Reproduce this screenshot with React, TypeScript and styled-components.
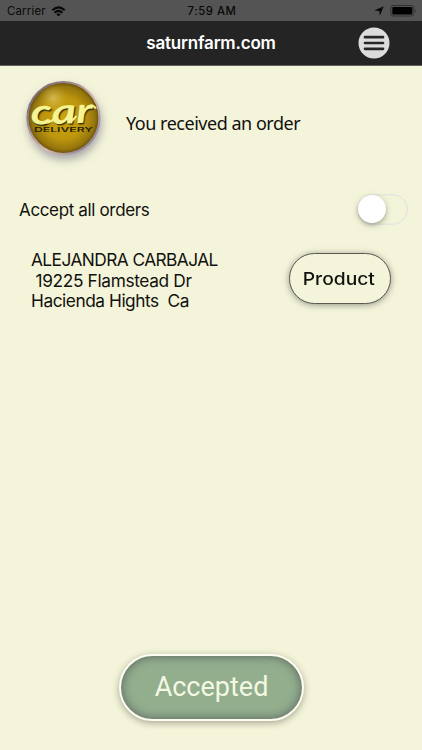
import React, { useState } from 'react';
import styled, { createGlobalStyle } from 'styled-components';

const GlobalStyle = createGlobalStyle`
  * { box-sizing: border-box; }
  body { margin: 0; background: #f4f4da; }
  button { font: inherit; padding: 0; cursor: pointer; }
`;

const Screen = styled.main`
  width: 422px;
  height: 750px;
  overflow: hidden;
  display: flex;
  flex-direction: column;
  background: #f4f4da;
  color: #11110e;
  font-family: Inter, "Liberation Sans", sans-serif;
`;

const StatusBar = styled.div`
  height: 21px;
  flex: none;
  display: grid;
  grid-template-columns: 1fr auto 1fr;
  align-items: center;
  padding: 1px 5px 0 7px;
  background: #545454;
  color: #080808;
  font-size: 11.3px;
  line-height: 20px;
`;

const StatusGroup = styled.div<{ $end?: boolean }>`
  display: flex;
  align-items: center;
  gap: ${({ $end }) => ($end ? 6 : 5)}px;
  justify-content: ${({ $end }) => ($end ? 'flex-end' : 'flex-start')};
  svg { display: block; }
`;

const Carrier = styled.span`
  letter-spacing: 0.25px;
`;

const Clock = styled.span`
  font-weight: 500;
  letter-spacing: 0.55px;
`;

const NavBar = styled.header`
  height: 45px;
  flex: none;
  display: grid;
  grid-template-columns: 1fr auto 1fr;
  align-items: center;
  padding: 0 32px;
  background: #242424;
  border-bottom: 1px solid #62625a;
`;

const SiteTitle = styled.h1`
  grid-column: 2;
  margin: 0;
  color: #fff;
  font-size: 17px;
  font-weight: 600;
  line-height: 20px;
  letter-spacing: -0.2px;
`;

const MenuButton = styled.button`
  justify-self: end;
  width: 32px;
  height: 32px;
  margin-top: -1px;
  border: 0;
  background: none;
  svg { display: block; }
`;

const Notice = styled.section`
  height: 114px;
  flex: none;
  display: flex;
  align-items: flex-start;
  padding: 15px 0 0 25px;
`;

const LogoSlot = styled.div`
  width: 101px;
  height: 86px;
  flex: none;
  svg { display: block; overflow: visible; }
`;

const NoticeText = styled.p`
  margin: 30px 0 0;
  font-family: "Noto Sans", "Open Sans", sans-serif;
  font-size: 18px;
  line-height: 24px;
  letter-spacing: -0.48px;
  white-space: nowrap;
`;

const SettingRow = styled.label`
  height: 60px;
  flex: none;
  display: flex;
  align-items: center;
  justify-content: space-between;
  padding: 0 14px 2px 19px;
  font-size: 17px;
  line-height: 20px;
`;

const SettingName = styled.span`
  padding-top: 2px;
  letter-spacing: -0.35px;
`;

const Toggle = styled.button<{ $on: boolean }>`
  width: 51px;
  height: 31px;
  display: flex;
  align-items: center;
  justify-content: ${({ $on }) => ($on ? 'flex-end' : 'flex-start')};
  border: 1.5px solid #e5e5e1;
  border-radius: 16px;
  background: ${({ $on }) => ($on ? '#92ae8d' : 'transparent')};
  box-shadow: inset 0 0 0 0.5px #e5e5e1;
`;

const Knob = styled.span`
  width: 28px;
  height: 28px;
  border-radius: 50%;
  background: #fff;
  box-shadow: 0 2px 4px rgba(50, 50, 40, 0.32), 0 2px 9px rgba(50, 50, 40, 0.12);
`;

const OrderRow = styled.section`
  flex: none;
  display: flex;
  justify-content: space-between;
  align-items: flex-start;
  padding: 8px 31px 0;
`;

const Address = styled.div`
  margin-top: 2px;
  font-size: 17.3px;
  line-height: 20.5px;
  white-space: pre;
`;

const AddressLine = styled.div<{ $spacing: number }>`
  letter-spacing: ${({ $spacing }) => $spacing}px;
`;

const ProductButton = styled.button`
  width: 102px;
  height: 51px;
  margin-top: 5px;
  border: 1px solid #5a5a50;
  border-radius: 26px;
  background: #f4f4da;
  color: #11110e;
  box-shadow: 0 1px 6px rgba(50, 50, 60, 0.5);
  font-size: 17.5px;
  font-weight: 500;
  line-height: 24px;
`;

const WideLabel = styled.span`
  display: inline-block;
  margin-left: -2px;
  transform: scaleX(1.1);
`;

const Footer = styled.footer`
  margin-top: auto;
  display: flex;
  justify-content: center;
  padding-bottom: 29px;
`;

const AcceptedButton = styled.button`
  width: 185px;
  height: 67px;
  padding: 0 0 2px 1px;
  border: 2px solid #fdfdf2;
  border-radius: 34px;
  background: #92ae8d;
  color: #f4f8e2;
  box-shadow: 0 2px 7px rgba(70, 70, 55, 0.45), inset 0 0 10px 1px #606b64;
  font-family: Roboto, sans-serif;
  font-size: 27px;
  line-height: 36px;
`;

const WifiIcon = () => (
  <svg width="15" height="11" viewBox="0 0 14 11" fill="none" stroke="#080808" strokeWidth="2">
    <path d="M.8 4.2Q7-1.4 13.2 4.2M3 6.7Q7 3.1 11 6.7" />
    <path d="M7 10.5 4.8 8.2Q7 6.5 9.2 8.2Z" fill="#080808" stroke="none" />
  </svg>
);

const LocationIcon = () => (
  <svg width="10" height="10" viewBox="0 0 10 10">
    <path d="M9.7.3 5.8 9.7 5.3 4.9.3 4.4Z" fill="#080808" />
  </svg>
);

const BatteryIcon = () => (
  <svg width="27" height="12" viewBox="0 0 27 12">
    <rect x=".8" y=".5" width="23" height="10.5" rx="2.4" fill="none" stroke="#303030" />
    <rect x="2.3" y="2" width="20" height="7.5" rx="1" fill="#000" />
    <path d="M25.2 4.1Q27 5.8 25.2 7.5Z" fill="#303030" />
  </svg>
);

const MenuIcon = () => (
  <svg width="32" height="32" viewBox="0 0 32 32">
    <circle cx="16" cy="16" r="15.5" fill="#dcdcdc" />
    <path d="M7 10.2H25M7 16H25M7 21.8H25" stroke="#262626" strokeWidth="2.7" strokeLinecap="round" />
  </svg>
);

const LogoWord = styled.text`
  font-family: Lato, sans-serif;
  font-size: 35px;
  font-style: italic;
  font-weight: 700;
  fill: #f5f490;
  text-shadow: 0.8px 1.5px 1px #353009;
`;

const LogoCaption = styled.text`
  font-family: Inter, sans-serif;
  font-size: 5.8px;
  font-weight: 600;
  fill: #292405;
`;

const CarLogo = () => (
  <svg width="78" height="80" viewBox="0 0 78 80" role="img" aria-label="Car delivery">
    <defs>
      <radialGradient id="gold" cx="50%" cy="50%" r="53%">
        <stop offset="0" stopColor="#cba40d" />
        <stop offset=".55" stopColor="#be960c" />
        <stop offset=".82" stopColor="#967609" />
        <stop offset="1" stopColor="#4d3c06" />
      </radialGradient>
      <radialGradient id="glint">
        <stop offset="0" stopColor="#e6d88c" stopOpacity=".55" />
        <stop offset="1" stopColor="#d2b438" stopOpacity="0" />
      </radialGradient>
      <linearGradient id="rim" x1="0" y1="0" x2="1" y2="1">
        <stop offset="0" stopColor="#65566c" />
        <stop offset=".6" stopColor="#d5b8b0" />
        <stop offset="1" stopColor="#77708f" />
      </linearGradient>
      <filter id="drop" x="-30%" y="-30%" width="160%" height="160%">
        <feDropShadow dx="1" dy="5" stdDeviation="4" floodColor="#747488" floodOpacity=".6" />
      </filter>
    </defs>
    <circle cx="38.5" cy="37" r="36" fill="url(#gold)" stroke="url(#rim)" strokeWidth="2.2" filter="url(#drop)" />
    <circle cx="28" cy="17" r="15" fill="url(#glint)" />
    <g transform="rotate(-2 38 40)">
      <LogoWord x="6" y="42.5" textLength="62" lengthAdjust="spacingAndGlyphs">car</LogoWord>
      <path d="M20 41Q26 41.5 31 36M43 41Q47 41 51 36M63 26.5Q68 24.5 71 28" fill="none" stroke="#f5f490" strokeWidth="2" strokeLinecap="round" />
    </g>
    <LogoCaption x="9" y="50.5" textLength="59" lengthAdjust="spacingAndGlyphs">DELIVERY</LogoCaption>
  </svg>
);

export default function App() {
  const [acceptAll, setAcceptAll] = useState(false);
  return (
    <>
      <GlobalStyle />
      <Screen>
        <StatusBar>
          <StatusGroup><Carrier>Carrier</Carrier><WifiIcon /></StatusGroup>
          <Clock>7:59 AM</Clock>
          <StatusGroup $end><LocationIcon /><BatteryIcon /></StatusGroup>
        </StatusBar>
        <NavBar>
          <SiteTitle>saturnfarm.com</SiteTitle>
          <MenuButton aria-label="Menu"><MenuIcon /></MenuButton>
        </NavBar>
        <Notice>
          <LogoSlot><CarLogo /></LogoSlot>
          <NoticeText>You received an order</NoticeText>
        </Notice>
        <SettingRow>
          <SettingName>Accept all orders</SettingName>
          <Toggle
            type="button"
            role="switch"
            aria-checked={acceptAll}
            $on={acceptAll}
            onClick={() => setAcceptAll(!acceptAll)}
          >
            <Knob />
          </Toggle>
        </SettingRow>
        <OrderRow>
          <Address>
            <AddressLine $spacing={-0.55}>ALEJANDRA CARBAJAL</AddressLine>
            <AddressLine $spacing={-0.35}>{' 19225 Flamstead Dr'}</AddressLine>
            <AddressLine $spacing={-0.45}>{'Hacienda Hights  Ca'}</AddressLine>
          </Address>
          <ProductButton type="button"><WideLabel>Product</WideLabel></ProductButton>
        </OrderRow>
        <Footer>
          <AcceptedButton type="button">Accepted</AcceptedButton>
        </Footer>
      </Screen>
    </>
  );
}
